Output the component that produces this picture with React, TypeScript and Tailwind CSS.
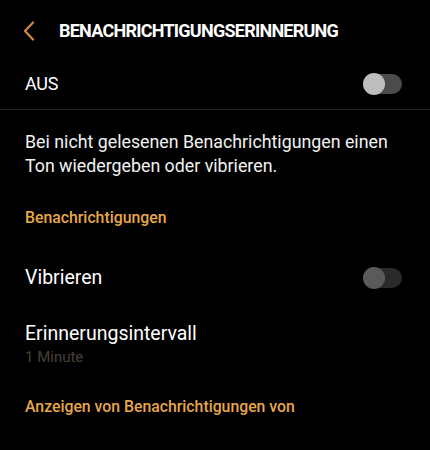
import type { ReactNode } from 'react'

function Toggle({ disabled }: { disabled?: boolean }) {
  return (
    <div className={`relative w-[39px] h-[20px] rounded-full ${disabled ? 'bg-[#2a2a2a]' : 'bg-[#4b4b4b]'}`}>
      <div
        className={`absolute left-0 top-[-1px] w-[22px] h-[22px] rounded-full ${
          disabled ? 'bg-[#5a5a5a]' : 'bg-[#bdbdbd]'
        }`}
      />
    </div>
  )
}

function SectionLabel({ children, className = '' }: { children: ReactNode; className?: string }) {
  return (
    <div className={`px-[25px] text-[15.8px] leading-[20px] font-medium text-[#e8a748] ${className}`}>
      {children}
    </div>
  )
}

export default function App() {
  return (
    <div
      className="w-[430px] h-[450px] bg-black text-white overflow-hidden flex flex-col"
      style={{ fontFamily: 'Roboto, "Noto Sans", sans-serif' }}
    >
      {/* header */}
      <div className="h-[59px] flex items-center pl-[22px] pt-[2px]">
        <svg width="14" height="20" viewBox="0 0 14 20" className="shrink-0">
          <path d="M11 1.5 L3 10 L11 18.5" fill="none" stroke="#cf8b46" strokeWidth="2.2" strokeLinecap="round" strokeLinejoin="round" />
        </svg>
        <h1 className="ml-[23px] text-[18px] leading-[24px] font-bold tracking-[-0.75px] text-white">
          BENACHRICHTIGUNGSERINNERUNG
        </h1>
      </div>

      {/* master switch */}
      <div className="h-[50px] flex items-center justify-between pl-[25px] pr-[28px]">
        <span className="text-[18px] leading-[24px] tracking-[-0.3px]">AUS</span>
        <Toggle />
      </div>
      <div className="h-px bg-[#262626]" />

      <p className="mt-[20px] px-[25px] text-[17.8px] leading-[24px] text-[#f2f2f2]">
        Bei nicht gelesenen Benachrichtigungen einen Ton wiedergeben oder vibrieren.
      </p>

      <SectionLabel className="mt-[30px]">Benachrichtigungen</SectionLabel>

      <div className="mt-[38px] flex items-center justify-between pl-[25px] pr-[28px]">
        <span className="text-[19.5px] leading-[24px]">Vibrieren</span>
        <Toggle disabled />
      </div>

      <div className="mt-[32px] px-[25px]">
        <div className="text-[19.5px] leading-[24px]">Erinnerungsintervall</div>
        <div className="mt-[1px] text-[15px] leading-[20px] text-[#4a4036]">1 Minute</div>
      </div>

      <SectionLabel className="mt-[30px]">Anzeigen von Benachrichtigungen von</SectionLabel>
    </div>
  )
}
